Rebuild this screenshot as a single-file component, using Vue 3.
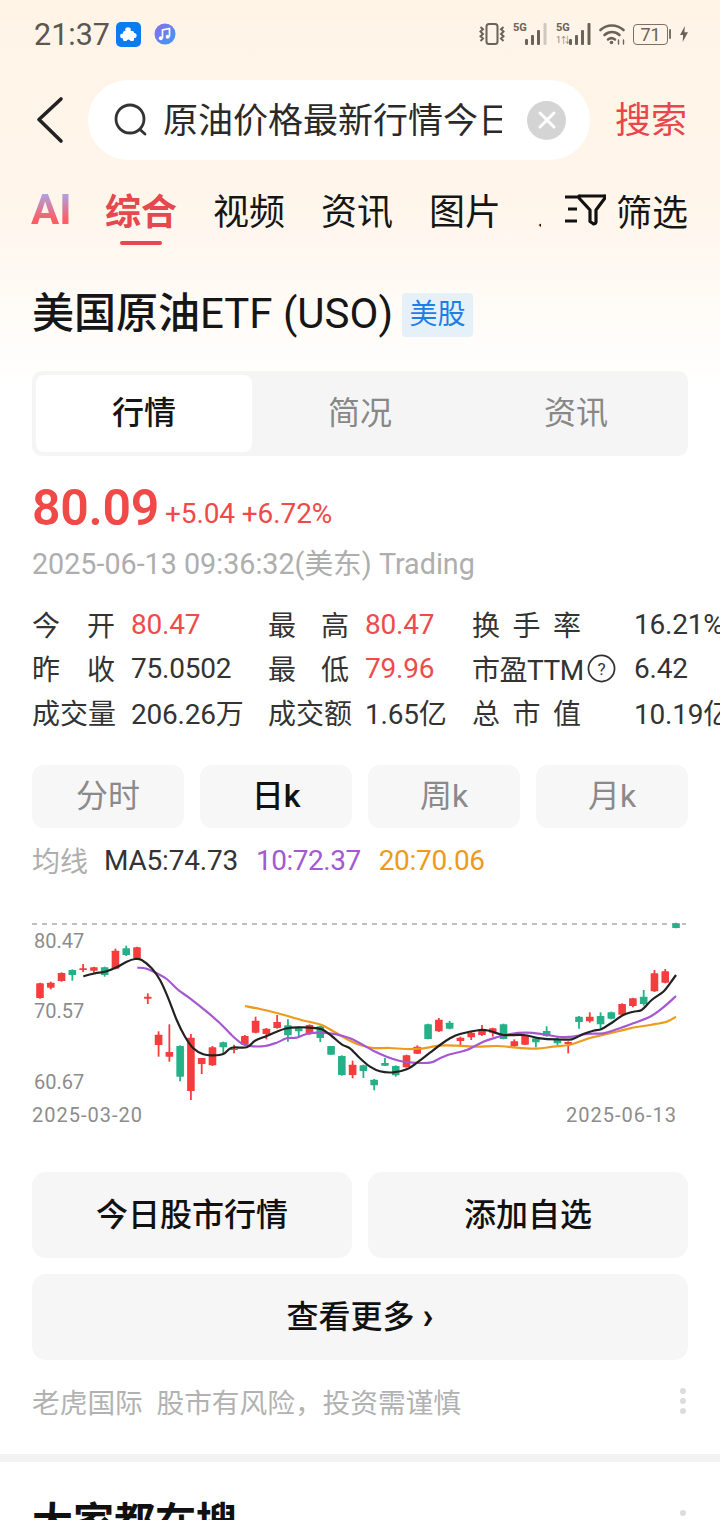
<template>
  <div class="page">
    <div class="status">
      <span class="time">21:37</span>
      <svg class="app-badge" width="25" height="25" viewBox="0 0 25 25">
        <rect width="25" height="25" rx="5" fill="#0a7cf0" />
        <g fill="#fff">
          <rect x="7" y="9" width="11" height="10" rx="1.500" />
          <circle cx="12" cy="8" r="2.800" />
          <circle cx="18" cy="13.500" r="2.600" />
          <circle cx="6.500" cy="14" r="2.400" />
        </g>
        <circle cx="12.500" cy="19.500" r="2" fill="#0a7cf0" />
      </svg>
      <svg class="app-music" width="22" height="22" viewBox="0 0 22 22">
        <defs>
          <linearGradient id="mus" x1="0" y1="0" x2="1" y2="1">
            <stop offset="0" stop-color="#8a6cf0" />
            <stop offset="1" stop-color="#3d9af5" />
          </linearGradient>
        </defs>
        <circle cx="11" cy="11" r="10.500" fill="url(#mus)" />
        <path d="M8.500 15V7l7-1.500V13.500" stroke="#fff" stroke-width="1.700" fill="none" />
        <circle cx="6.800" cy="15.200" r="2" fill="#fff" />
        <circle cx="13.700" cy="13.800" r="2" fill="#fff" />
      </svg>
      <div class="status-right">
        <svg class="si-vib" width="26" height="24" viewBox="0 0 26 24" fill="none" stroke="#6b6258" stroke-width="2">
          <rect x="7.500" y="2" width="11" height="20" rx="2.500" />
          <path d="M1.500 5l2.500 2.300-2.500 2.300 2.500 2.400-2.500 2.300 2.500 2.300-2.500 2.400M24.500 5L22 7.300l2.500 2.300L22 12l2.500 2.300-2.500 2.300 2.500 2.400" />
        </svg>
        <div class="signal si-1">
          <div class="sig-lab"><span class="five-g">5G</span></div>
          <svg width="22" height="24" viewBox="0 0 22 24" fill="#6b6258">
            <rect x="0" y="17" width="3" height="6" rx="1" />
            <rect x="6" y="13" width="3" height="10" rx="1" />
            <rect x="12" y="8" width="3" height="15" rx="1" />
            <rect x="18.500" y="1" width="3" height="22" rx="1" fill="#cfc8bf" />
          </svg>
        </div>
        <div class="signal si-2">
          <div class="sig-lab">
            <span class="five-g">5G</span>
            <span class="one">1⇅</span>
          </div>
          <svg width="22" height="24" viewBox="0 0 22 24" fill="#6b6258">
            <rect x="0" y="17" width="3" height="6" rx="1" />
            <rect x="6" y="13" width="3" height="10" rx="1" />
            <rect x="12" y="8" width="3" height="15" rx="1" />
            <rect x="18.500" y="1" width="3" height="22" rx="1" />
          </svg>
        </div>
        <svg class="si-wifi" width="27" height="22" viewBox="0 0 27 22" fill="none" stroke="#6b6258" stroke-width="2.600" stroke-linecap="round">
          <path d="M1.500 7c6.500-6 16-6 23 0" />
          <path d="M5.500 12c4.500-4 10.500-4 15 0" />
          <path d="M9 16.500c2-1.500 5-1.500 7 0" />
          <circle cx="12.500" cy="19.500" r="1.800" fill="#6b6258" stroke="none" />
          <path d="M19.500 21v-4M24.500 21v-4" stroke-width="1.400" />
        </svg>
        <div class="battery">
          <span class="battery-box">71</span>
          <i class="battery-tip"></i>
        </div>
        <svg class="si-bolt" width="8" height="16" viewBox="0 0 9 18"><path d="M5.500 0L0 10h3.500L3 18l6-11H5z" fill="#6b6258" /></svg>
      </div>
    </div>

    <div class="search-row">
      <svg class="back" width="28" height="48" viewBox="0 0 28 48" fill="none" stroke="#222" stroke-width="3.600" stroke-linecap="round" stroke-linejoin="round">
        <path d="M25 3L3 23.500 25 45" />
      </svg>
      <div class="search-box">
        <svg class="search-icon" width="36" height="36" viewBox="0 0 36 36" fill="none" stroke="#333" stroke-width="2.800" stroke-linecap="round">
          <circle cx="17" cy="17" r="14" />
          <path d="M27.500 28l4.500 4" />
        </svg>
        <div class="search-text">原油价格最新行情今日</div>
        <div class="clear">
          <svg width="20" height="20" viewBox="0 0 20 20" stroke="#fff" stroke-width="3" stroke-linecap="round">
            <path d="M3 3l14 14M17 3L3 17" />
          </svg>
        </div>
      </div>
      <span class="search-btn">搜索</span>
    </div>

    <div class="tabs">
      <div class="tab-scroll">
        <span class="ai">AI</span>
        <span v-for="t in tabs" :key="t" class="tab" :class="{ on: t === '综合' }">{{ t }}</span>
      </div>
      <div class="filter">
        <svg width="42" height="34" viewBox="0 0 42 34" fill="none" stroke="#111" stroke-width="3.200" stroke-linejoin="round">
          <path d="M1 4h12M4 16h9M1 28h12" />
          <path d="M16 3h24a1 1 0 0 1 1 2L32 17v12a2 2 0 0 1-3 1.500l-3-2V17L15 5a1 1 0 0 1 1-2z" />
        </svg>
        <span>筛选</span>
      </div>
    </div>

    <div class="title-row">
      <span class="title">美国原油<span class="title-en">ETF (USO)</span></span>
      <span class="market">美股</span>
    </div>

    <div class="segment">
      <span v-for="(s, i) in segments" :key="s" class="seg" :class="{ on: i === 0 }">{{ s }}</span>
    </div>

    <div class="price-row">
      <span class="price">80.09</span>
      <span class="change">+5.04 +6.72%</span>
    </div>
    <div class="date">2025-06-13 09:36:32(美东) Trading</div>

    <div class="stats">
      <div class="stat-row" v-for="(row, r) in stats" :key="r">
        <template v-for="(c, i) in row" :key="i">
          <span class="lab" v-if="c.label !== '市盈TTM'">{{ c.label }}</span>
          <span class="lab lab-ttm" v-else>
            <span class="ttm-text">市盈TTM</span>
            <svg width="29" height="29" viewBox="0 0 30 30">
              <circle cx="15" cy="15" r="13.500" fill="none" stroke="#333" stroke-width="1.800" />
              <text x="15" y="21.500" text-anchor="middle" font-size="18" fill="#333" font-family="Roboto, sans-serif">?</text>
            </svg>
          </span>
          <span class="val" :class="{ red: c.red }">{{ c.value }}</span>
        </template>
      </div>
    </div>

    <div class="periods">
      <span v-for="(p, i) in periods" :key="p" class="period" :class="{ on: i === 1 }">{{ p }}</span>
    </div>

    <div class="ma">
      <span class="ma-lab">均线</span>
      <span class="ma5">MA5:74.73</span>
      <span class="ma10">10:72.37</span>
      <span class="ma20">20:70.06</span>
    </div>

    <svg class="chart" width="720" height="240" viewBox="0 0 720 240">
      <line x1="32" y1="34" x2="686" y2="34" stroke="#aaa" stroke-width="1.600" stroke-dasharray="5 5" />
      <g v-for="(c, i) in candles" :key="i">
        <line :x1="c.x" :x2="c.x" :y1="c.wt" :y2="c.wb" :stroke="c.color" stroke-width="1.800" />
        <rect :x="c.x - 3.800" :y="c.t" width="7.600" :height="c.h" :fill="c.color" rx="0.600" />
      </g>
      <path :d="ma20Path" fill="none" stroke="#ee9a1a" stroke-width="2.200" stroke-linejoin="round" />
      <path :d="ma10Path" fill="none" stroke="#a558d2" stroke-width="2.200" stroke-linejoin="round" />
      <path :d="ma5Path" fill="none" stroke="#222" stroke-width="2.200" stroke-linejoin="round" />
      <text class="axis" x="34" y="58">80.47</text>
      <text class="axis" x="34" y="128">70.57</text>
      <text class="axis" x="34" y="199">60.67</text>
      <text class="axis date-axis" x="32" y="232">2025-03-20</text>
      <text class="axis date-axis" x="677" y="232" text-anchor="end">2025-06-13</text>
    </svg>

    <div class="actions">
      <div class="action">今日股市行情</div>
      <div class="action">添加自选</div>
      <div class="action wide">查看更多 <b class="more">›</b></div>
    </div>

    <div class="source">
      <span>老虎国际&nbsp;&nbsp;股市有风险，投资需谨慎</span>
      <div class="dots"><i></i><i></i><i></i></div>
    </div>

    <div class="band"></div>

    <div class="hot">
      <span>大家都在搜</span>
      <div class="dots"><i></i></div>
    </div>
  </div>
</template>

<script setup>
const tabs = ['综合', '视频', '资讯', '图片', '人物']
const segments = ['行情', '简况', '资讯']
const periods = ['分时', '日k', '周k', '月k']

const stats = [
  [
    { label: '今开', value: '80.47', red: true },
    { label: '最高', value: '80.47', red: true },
    { label: '换手率', value: '16.21%' }
  ],
  [
    { label: '昨收', value: '75.0502' },
    { label: '最低', value: '79.96', red: true },
    { label: '市盈TTM', value: '6.42' }
  ],
  [
    { label: '成交量', value: '206.26万' },
    { label: '成交额', value: '1.65亿' },
    { label: '总市值', value: '10.19亿' }
  ]
]

// r/g, body top, body bottom, wick top, wick bottom, read off a 3x view of the chart
const raw = [
  'r220,264,218,266', 'r218,233,215,238', 'r189,213,187,215', 'g180,195,178,212', 'r175,180,162,186',
  'r172,182,170,188', 'g172,195,170,200', 'r122,176,116,178', 'g115,135,107,138', 'r112,145,110,147',
  'r260,266,250,282', 'r374,405,364,440', 'r426,440,343,455', 'g408,500,406,514', 'r383,543,372,570',
  'r444,462,444,492', 'r412,466,408,468', 'g397,412,395,432', 'r416,420,404,430', 'r378,404,375,408',
  'r332,368,320,370', 'r356,372,354,388', 'r336,354,315,356', 'g346,376,328,395', 'g352,364,350,382',
  'r345,372,343,374', 'g349,384,347,396', 'g408,434,408,434', 'g438,495,436,497', 'r464,495,452,505',
  'g466,483,464,504', 'g509,526,507,541', 'g459,467,444,468', 'g468,496,466,500', 'r436,472,434,473',
  'r410,431,406,432', 'g343,387,341,388', 'r329,364,324,366', 'g338,356,333,358', 'r383,393,380,405',
  'r368,382,364,390', 'r358,375,345,378', 'r355,368,353,380', 'g343,387,341,388', 'r394,408,388,412',
  'r377,404,375,405', 'g385,397,383,412', 'g363,378,349,380', 'g388,400,380,406', 'r396,402,394,430',
  'g320,336,318,356', 'r320,334,307,338', 'g318,343,307,355', 'g307,326,305,328', 'r282,314,280,316',
  'r265,288,263,292', 'g260,282,240,287', 'r190,244,180,246', 'r184,218,177,220', 'g40,54,38,55'
]

const top = 20

const candles = raw.map((s, i) => {
  const [t, b, wt, wb] = s.slice(1).split(',').map(n => n / 3 + top)
  return {
    x: 40 + i * 10.78,
    t,
    h: b - t,
    wt,
    wb,
    color: s[0] === 'r' ? '#f53d3d' : '#25b088'
  }
})

function pts(left, right) {
  return [
    ...left.map(([x, y]) => [20 + x / 3, y / 3 + top]),
    ...right.map(([x, y]) => [350 + x / 3, y / 3 + top])
  ]
}

function smooth(p) {
  let d = `M${p[0][0]} ${p[0][1]}`
  for (let i = 0; i < p.length - 1; i++) {
    const a = p[i - 1] || p[i]
    const b = p[i]
    const c = p[i + 1]
    const e = p[i + 2] || c
    const c1 = [b[0] + (c[0] - a[0]) / 6, b[1] + (c[1] - a[1]) / 6]
    const c2 = [c[0] - (e[0] - b[0]) / 6, c[1] - (e[1] - b[1]) / 6]
    d += `C${c1[0].toFixed(1)} ${c1[1].toFixed(1)} ${c2[0].toFixed(1)} ${c2[1].toFixed(1)} ${c[0].toFixed(1)} ${c[1].toFixed(1)}`
  }
  return d
}

const ma5Path = smooth(pts(
  [[190,199],[225,190],[255,185],[290,172],[320,155],[345,147],[365,150],[395,175],[420,210],[445,265],[470,330],[495,380],[520,415],[550,433],[580,436],[610,432],[635,413],[680,412],[705,392],[740,378],[770,365],[800,355],[835,352],[870,353],[905,358],[935,378],[965,403]],
  [[0,415],[30,445],[60,470],[90,484],[130,487],[170,478],[205,455],[240,428],[270,405],[300,385],[330,372],[390,360],[420,363],[460,375],[520,375],[570,385],[620,388],[665,388],[700,372],[730,362],[755,357],[790,335],[820,315],[850,305],[875,300],[905,270],[940,245],[960,220],[978,195]]
))

const ma10Path = smooth(pts(
  [[352,173],[380,176],[410,190],[440,207],[475,240],[510,265],[560,305],[600,340],[640,380],[670,403],[700,409],[735,408],[770,398],[800,385],[830,383],[860,372],[900,368],[950,373]],
  [[0,385],[30,400],[70,422],[110,440],[150,453],[190,458],[240,458],[270,445],[300,433],[350,420],[400,395],[440,382],[480,372],[530,368],[580,373],[630,381],[670,380],[710,372],[760,370],[800,358],[850,340],[900,320],[940,292],[978,258]]
))

const ma20Path = smooth(pts(
  [[675,288],[720,297],[770,309],[820,323],[860,334],[905,345],[950,370]],
  [[0,392],[30,405],[70,414],[120,414],[165,417],[210,416],[270,407],[320,407],[380,410],[440,408],[500,413],[560,416],[610,410],[660,404],[720,384],[780,370],[840,355],[900,345],[950,335],[978,320]]
))
</script>

<style>
html, body {
  margin: 0;
  background: #fff;
  overflow: hidden;
}
</style>

<style scoped>
.page {
  width: 720px;
  height: 1520px;
  overflow: hidden;
  background: linear-gradient(#fff4e6 0, #fff5ea 190px, #fff 390px);
  font-family: Roboto, "Noto Sans CJK SC", sans-serif;
  color: #222;
}
.status {
  height: 68px;
  display: flex;
  align-items: center;
  padding: 0 32px 0 34px;
  box-sizing: border-box;
}
.time {
  font-size: 30.500px;
  color: #5c5650;
  width: 82px;
}
.app-music {
  margin-left: 13px;
}
.status-right {
  margin-left: auto;
  display: flex;
  align-items: center;
}
.signal {
  display: flex;
  align-items: flex-start;
  justify-content: space-between;
  height: 24px;
}
.si-1 {
  width: 34px;
  margin-left: 8px;
}
.si-2 {
  width: 35px;
  margin-left: 9px;
}
.si-wifi {
  margin-left: 8px;
}
.sig-lab {
  width: 12px;
  display: flex;
  flex-direction: column;
}
.five-g {
  font-size: 11px;
  line-height: 11px;
  font-weight: 700;
  color: #6b6258;
  white-space: nowrap;
}
.one {
  font-size: 9px;
  line-height: 10px;
  color: #8a8278;
  white-space: nowrap;
  margin-top: 2px;
}
.battery {
  margin-left: 7px;
  width: 40px;
  display: flex;
  align-items: center;
}
.battery-box {
  width: 33px;
  height: 19px;
  box-sizing: content-box;
  border: 1.500px solid #7a7268;
  border-radius: 4px;
  font-size: 18px;
  line-height: 19px;
  text-align: center;
  color: #6b6258;
}
.battery-tip {
  width: 2px;
  height: 10px;
  margin-left: 1px;
  background: #7a7268;
  border-radius: 1px;
}
.si-bolt {
  margin-left: 7px;
}
.search-row {
  height: 104px;
  display: flex;
  align-items: center;
  padding: 0 32px 0 36px;
  box-sizing: border-box;
}
.back {
  flex: none;
}
.search-box {
  width: 502px;
  height: 80px;
  margin-left: 24px;
  border-radius: 40px;
  background: #fff;
  display: flex;
  align-items: center;
  padding-left: 25px;
  box-sizing: border-box;
}
.search-icon {
  margin-top: -1px;
}
.search-text {
  width: 339px;
  margin-left: 14px;
  margin-top: -6px;
  font-size: 35px;
  white-space: nowrap;
  overflow: hidden;
  color: #2a2a2a;
}
.clear {
  width: 39px;
  height: 39px;
  margin-left: 25px;
  border-radius: 50%;
  background: #d4d4d4;
  display: flex;
  align-items: center;
  justify-content: center;
}
.search-btn {
  margin-left: 25px;
  margin-top: -7px;
  font-size: 36px;
  color: #e8464a;
}
.tabs {
  height: 76px;
  display: flex;
  align-items: center;
  justify-content: space-between;
  padding: 0 32px 0 31px;
  box-sizing: border-box;
}
.tab-scroll {
  width: 510px;
  height: 76px;
  display: flex;
  align-items: center;
  gap: 36px;
  overflow: hidden;
  white-space: nowrap;
}
.tab-scroll > span {
  margin-top: -2px;
}
.ai {
  font-size: 42px;
  font-weight: 700;
  width: 39px;
  flex: none;
  margin-right: -1px;
  background: linear-gradient(#a8a6ee 15%, #fb5e64 70%);
  -webkit-background-clip: text;
  background-clip: text;
  color: transparent;
}
.tab {
  flex: none;
  position: relative;
  font-size: 36px;
  color: #161616;
}
.tab.on {
  color: #e5484d;
  font-weight: 700;
}
.tab.on::after {
  content: '';
  position: absolute;
  left: 15px;
  right: 15px;
  bottom: -10px;
  height: 4px;
  border-radius: 2px;
  background: #e5484d;
}
.filter {
  display: flex;
  align-items: center;
  gap: 10px;
  font-size: 36px;
  color: #161616;
}
.title-row {
  height: 100px;
  display: flex;
  align-items: center;
  padding: 0 32px;
  box-sizing: border-box;
  margin-top: 11px;
}
.title {
  font-size: 42px;
  font-weight: 500;
  color: #161616;
  white-space: nowrap;
}
.title-en {
  font-weight: 450;
}
.market {
  margin-left: 9px;
  margin-top: 12px;
  width: 71px;
  height: 44px;
  background: #e6f0f8;
  border-radius: 4px;
  color: #1a80e6;
  font-size: 28px;
  line-height: 44px;
  text-align: center;
}
.segment {
  margin: 12px 32px 0;
  height: 85px;
  background: #f5f5f5;
  border-radius: 10px;
  display: grid;
  grid-template-columns: 216px 216px 216px;
  padding: 4px;
  box-sizing: border-box;
}
.seg {
  font-size: 32px;
  line-height: 77px;
  text-align: center;
  color: #888;
}
.seg.on {
  background: #fff;
  border-radius: 8px;
  color: #161616;
  font-weight: 500;
}
.price-row {
  margin-top: 21px;
  padding-left: 32px;
  height: 62px;
  display: flex;
  align-items: center;
  color: #f04a48;
}
.price {
  font-size: 50px;
  font-weight: 600;
  letter-spacing: -0.300px;
}
.change {
  margin-left: 6px;
  margin-top: 11px;
  font-size: 28px;
  letter-spacing: -0.100px;
}
.date {
  margin-top: 5px;
  padding-left: 32px;
  font-size: 28.700px;
  line-height: 40px;
  color: #aeaeae;
  white-space: nowrap;
}
.stats {
  margin-top: 18px;
  padding-left: 32px;
}
.stat-row {
  height: 44px;
  display: grid;
  grid-template-columns: 83px 153px 81px 123px 109px 1fr;
  align-items: center;
  font-size: 28px;
  white-space: nowrap;
  color: #333;
}
.lab {
  text-align: justify;
  text-align-last: justify;
}
.val {
  margin-left: 16px;
  letter-spacing: -0.200px;
}
.lab-ttm {
  display: flex;
  align-items: center;
  text-align-last: left;
}
.ttm-text {
  letter-spacing: -0.500px;
}
.lab-ttm svg {
  flex: none;
  margin-left: 3px;
}
.stat-row > .val:last-child {
  margin-left: 53px;
}
.red {
  color: #ee4b4b;
}
.periods {
  margin: 31px 32px 0;
  display: grid;
  grid-template-columns: repeat(4, 1fr);
  gap: 16px;
}
.period {
  height: 63px;
  line-height: 63px;
  border-radius: 12px;
  background: #f7f7f7;
  text-align: center;
  font-size: 32px;
  color: #8a8a8a;
}
.period.on {
  color: #111;
  font-weight: 500;
}
.ma {
  height: 64px;
  padding-left: 32px;
  display: flex;
  align-items: center;
  font-size: 28px;
  white-space: nowrap;
}
.ma-lab {
  color: #aeaeae;
  margin-right: 16px;
}
.ma5 {
  color: #333;
  margin-right: 18px;
  letter-spacing: -0.200px;
}
.ma10 {
  color: #a558d2;
  margin-right: 18px;
  letter-spacing: -0.500px;
}
.ma20 {
  color: #ee9a1a;
  letter-spacing: -0.300px;
}
.chart {
  display: block;
  margin-top: -2px;
}
.axis {
  font-family: Roboto, sans-serif;
  font-size: 20px;
  fill: #8c8c8c;
}
.date-axis {
  letter-spacing: 1px;
}
.actions {
  margin: 42px 32px 0;
  display: grid;
  grid-template-columns: 1fr 1fr;
  gap: 16px;
}
.action {
  height: 86px;
  line-height: 86px;
  text-align: center;
  border-radius: 14px;
  background: #f6f6f6;
  font-size: 32px;
  font-weight: 500;
  color: #111;
}
.action.wide {
  grid-column: 1 / 3;
}
.more {
  font-weight: 700;
  font-size: 36px;
  line-height: 0;
}
.source {
  margin-top: 20px;
  padding: 0 32px;
  height: 42px;
  display: flex;
  align-items: center;
  justify-content: space-between;
  font-size: 27.700px;
  color: #b2b2b2;
}
.dots {
  display: flex;
  flex-direction: column;
  gap: 4px;
  margin-right: 2px;
}
.dots i {
  width: 6px;
  height: 6px;
  border-radius: 50%;
  background: #dcdcdc;
}
.band {
  margin-top: 32px;
  height: 8px;
  background: #f3f3f3;
}
.hot {
  margin-top: 33px;
  padding: 0 32px;
  display: flex;
  justify-content: space-between;
  font-size: 41px;
  font-weight: 700;
  line-height: 56px;
  color: #111;
}
.hot .dots {
  margin-top: 15px;
}
</style>
